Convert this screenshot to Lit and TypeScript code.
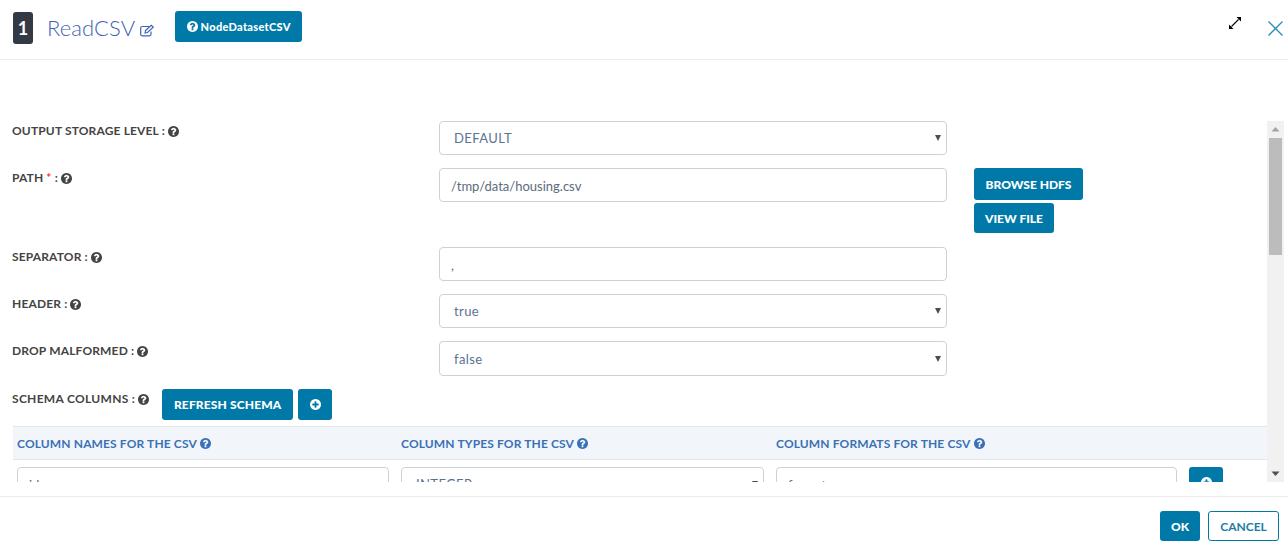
import {customElement} from "lit/decorators.js";
import {css, html, LitElement, svg} from "lit";

const QUESTION = svg`<path d="M896 1376v-192q0-14-9-23t-23-9h-192q-14 0-23 9t-9 23v192q0 14 9 23t23 9h192q14 0 23-9t9-23zm256-672q0-88-55.500-163t-138.500-116-170-41q-243 0-371 213-15 24 8 42l132 100q7 6 19 6 16 0 25-12 53-68 86-92 34-24 86-24 48 0 85.500 26t37.500 59q0 38-20 61t-68 45q-63 28-115.500 86.500t-52.500 125.500v36q0 14 9 23t23 9h192q14 0 23-9t9-23q0-19 21.500-49.500t54.500-49.500q32-18 49-28.500t46-35 44.500-48 28-60.500 12.500-81zm384 192q0 209-103 385.500t-279.500 279.500-385.500 103-385.500-103-279.500-279.500-103-385.500 103-385.500 279.500-279.500 385.500-103 385.500 103 279.500 279.500 103 385.500z"/>`;
const PLUS = svg`<path d="M1216 832v-128q0-26-19-45t-45-19h-256v-256q0-26-19-45t-45-19h-128q-26 0-45 19t-19 45v256h-256q-26 0-45 19t-19 45v128q0 26 19 45t45 19h256v256q0 26 19 45t45 19h128q26 0 45-19t19-45v-256h256q26 0 45-19t19-45zm320-64q0 209-103 385.500t-279.500 279.500-385.500 103-385.500-103-279.500-279.500-103-385.500 103-385.500 279.500-279.500 385.500-103 385.500 103 279.500 279.500 103 385.500z"/>`;

const help = () => html`<svg class="help" viewBox="0 128 1536 1536" fill="currentColor">${QUESTION}</svg>`;
const plus = () => html`<svg class="plus" viewBox="0 0 1536 1536" fill="currentColor">${PLUS}</svg>`;
const select = (value: string, cls = "") => html`
    <div class="select ${cls}"><select class="field"><option>${value}</option></select></div>
`;

@customElement("app-root")
class AppRoot extends LitElement {
    static styles = [css`
        :host {
            display: block;
            width: 1288px;
            height: 549px;
            overflow: hidden;
            background: #fff;
            font-family: "Lato", "Open Sans", sans-serif;
            color: #444;
        }
        .header {
            height: 59px;
            border-bottom: 1px solid #ebebeb;
            display: flex;
            align-items: flex-start;
            padding-left: 13px;
            padding-right: 5px;
        }
        .step {
            width: 20px;
            height: 32px;
            margin-top: 12px;
            border-radius: 3px;
            background: #343a45;
            color: #fff;
            font-size: 18px;
            font-weight: 700;
            line-height: 32px;
            text-align: center;
        }
        .title {
            margin-left: 14px;
            margin-top: 14px;
            font-size: 22px;
            font-weight: 300;
            line-height: 28px;
            color: #3f63b5;
            letter-spacing: 0.1px;
        }
        .edit {
            width: 14px;
            height: 13px;
            margin-left: 5px;
            margin-top: 24px;
            color: #3f63b5;
        }
        .btn {
            display: inline-flex;
            align-items: center;
            justify-content: center;
            box-sizing: border-box;
            border: none;
            border-radius: 3px;
            background: #0079a8;
            color: #fff;
            font-family: inherit;
            font-size: 12px;
            font-weight: 900;
            padding: 0;
        }
        .node {
            width: 127px;
            height: 31px;
            margin-left: 21px;
            margin-top: 11px;
            font-size: 11px;
            letter-spacing: 0.3px;
            gap: 3px;
        }
        .node .help { width: 11px; height: 11px; color: #fff; }
        .spacer { flex: 1; }
        .expand { width: 12px; height: 12px; margin-top: 17px; }
        .close { width: 15px; height: 15px; margin-top: 21px; margin-left: 27px; color: #2a8bbd; }

        .main {
            display: flex;
            height: 361px;
            margin-top: 61px;
            padding-right: 4px;
        }
        .form {
            flex: 1;
            min-width: 0;
            overflow: hidden;
            box-sizing: border-box;
            padding-left: 12px;
        }
        .row {
            display: grid;
            grid-template-columns: 427px 508px auto;
            column-gap: 0;
            align-items: start;
        }
        .row.r47 { height: 47px; }
        .row.r48 { height: 48px; }
        .row.r79 { height: 79px; }
        .label {
            font-size: 12px;
            font-weight: 700;
            line-height: 18px;
            padding-top: 1px;
            color: #444;
            letter-spacing: 0.15px;
            display: flex;
            align-items: center;
            gap: 3px;
            white-space: nowrap;
        }
        .req { color: #f33; }
        .help { width: 11px; height: 11px; flex: none; }
        .field {
            box-sizing: border-box;
            width: 100%;
            height: 34px;
            border: 1px solid #ccd2da;
            border-radius: 4px;
            background: #fff;
            padding: 1px 11px 0;
            font-family: inherit;
            font-size: 13px;
            color: #5c6b7c;
            outline: none;
        }
        .select { position: relative; }
        .select select {
            appearance: none;
            display: block;
            padding: 0 11px 0 14px;
            letter-spacing: 0.4px;
            color: #5a7390;
        }
        /* native-looking dropdown caret */
        .select::after {
            content: "";
            position: absolute;
            right: 6px;
            top: 50%;
            margin-top: -3px;
            border-left: 3.500px solid transparent;
            border-right: 3.500px solid transparent;
            border-top: 6px solid #4a4f57;
        }
        .select.tall select { height: 35px; }
        .side {
            display: flex;
            flex-direction: column;
            align-items: flex-start;
            gap: 3px;
            padding-left: 27px;
        }
        .browse { width: 109px; height: 32px; }
        .view { width: 80px; height: 30px; }
        .schema {
            display: flex;
            align-items: flex-start;
            height: 37px;
        }
        .schema .label { margin-right: 13px; letter-spacing: 0.3px; }
        .refresh { width: 131px; height: 31px; letter-spacing: 0.15px; }
        .add { width: 34px; height: 31px; margin-left: 5px; }
        .plus { width: 11px; height: 11px; }
        .thead {
            display: flex;
            height: 32px;
            margin-left: 1px;
            background: #f2f6fa;
            border-top: 1px solid #e1e6eb;
            border-bottom: 1px solid #e1e6eb;
            align-items: center;
            font-size: 12px;
            font-weight: 700;
            letter-spacing: 0.13px;
            color: #3a70b5;
            white-space: nowrap;
        }
        .thead > div {
            display: flex;
            align-items: center;
            gap: 3px;
            padding-left: 4px;
            box-sizing: border-box;
        }
        .c1 { width: 384px; }
        .c2 { width: 375px; }
        .tbody {
            display: flex;
            gap: 12px;
            margin-top: 7px;
            padding-left: 5px;
            align-items: flex-start;
        }
        .tbody .a { width: 372px; flex: none; }
        .tbody .b { width: 363px; flex: none; }
        .tbody .c { width: 401px; flex: none; }
        .tbody .btn { width: 34px; height: 31px; flex: none; }

        .rail {
            width: 17px;
            flex: none;
            background: #f1f1f1;
            display: flex;
            flex-direction: column;
            align-items: center;
        }
        .arrow { width: 17px; height: 17px; flex: none; color: #a3a3a3; }
        .arrow.dark { color: #505050; }
        .thumb { width: 13px; height: 117px; background: #bcbcbc; flex: none; }
        .track { flex: 1; }

        .footer {
            margin-top: 14px;
            border-top: 1px solid #ebebeb;
            display: flex;
            justify-content: flex-end;
            gap: 8px;
            padding: 14px 9px 0 0;
        }
        .ok { width: 40px; height: 30px; }
        .cancel {
            width: 71px;
            height: 30px;
            background: #fff;
            border: 1px solid #0079a8;
            color: #1c7ea8;
            font-weight: 700;
        }
    `];

    protected render(): unknown {
        return html`
            <div class="header">
                <div class="step">1</div>
                <div class="title">ReadCSV</div>
                <svg class="edit" viewBox="0 0 14 13" fill="none" stroke="currentColor" stroke-width="1.2">
                    <path d="M9.500 2.500H2.200a1.500 1.500 0 0 0-1.500 1.500v6.300a1.500 1.500 0 0 0 1.500 1.500h7.300a1.500 1.500 0 0 0 1.500-1.500V7.500"/>
                    <path d="M5.500 6.500l5.700-5.300 2 1.900-5.700 5.400-2.400.5z"/>
                </svg>
                <button class="btn node">${help()}NodeDatasetCSV</button>
                <div class="spacer"></div>
                <svg class="expand" viewBox="0 0 12 12" fill="#000">
                    <path d="M12 0v4.500L7.500 0zM0 12V7.500L4.500 12z"/>
                    <path d="M2.500 9.500l7-7" stroke="#000" stroke-width="1.100"/>
                </svg>
                <svg class="close" viewBox="0 0 15 15" fill="none" stroke="currentColor" stroke-width="1.300">
                    <path d="M.500.500l14 14M14.500.500l-14 14"/>
                </svg>
            </div>
            <div class="main">
                <div class="form">
                    <div class="row r47">
                        <div class="label">OUTPUT STORAGE LEVEL : ${help()}</div>
                        ${select("DEFAULT")}
                    </div>
                    <div class="row r79">
                        <div class="label">PATH <span class="req">*</span> : ${help()}</div>
                        <input class="field" .value=${"/tmp/data/housing.csv"} />
                        <div class="side">
                            <button class="btn browse">BROWSE HDFS</button>
                            <button class="btn view">VIEW FILE</button>
                        </div>
                    </div>
                    <div class="row r47">
                        <div class="label">SEPARATOR : ${help()}</div>
                        <input class="field" .value=${","} />
                    </div>
                    <div class="row r47">
                        <div class="label">HEADER : ${help()}</div>
                        ${select("true")}
                    </div>
                    <div class="row r48">
                        <div class="label">DROP MALFORMED : ${help()}</div>
                        ${select("false", "tall")}
                    </div>
                    <div class="schema">
                        <div class="label">SCHEMA COLUMNS : ${help()}</div>
                        <button class="btn refresh">REFRESH SCHEMA</button>
                        <button class="btn add">${plus()}</button>
                    </div>
                    <div class="thead">
                        <div class="c1">COLUMN NAMES FOR THE CSV ${help()}</div>
                        <div class="c2">COLUMN TYPES FOR THE CSV ${help()}</div>
                        <div>COLUMN FORMATS FOR THE CSV ${help()}</div>
                    </div>
                    <div class="tbody">
                        <input class="field a" .value=${"id"} />
                        ${select("INTEGER", "b")}
                        <input class="field c" .value=${"format"} />
                        <button class="btn">${plus()}</button>
                    </div>
                </div>
                <div class="rail">
                    <svg class="arrow" viewBox="0 0 17 17" fill="currentColor"><path d="M8.500 6l4 4.500h-8z"/></svg>
                    <div class="thumb"></div>
                    <div class="track"></div>
                    <svg class="arrow dark" viewBox="0 0 17 17" fill="currentColor"><path d="M4.500 6.500h8l-4 4.500z"/></svg>
                </div>
            </div>
            <div class="footer">
                <button class="btn ok">OK</button>
                <button class="btn cancel">CANCEL</button>
            </div>
        `;
    }
}
